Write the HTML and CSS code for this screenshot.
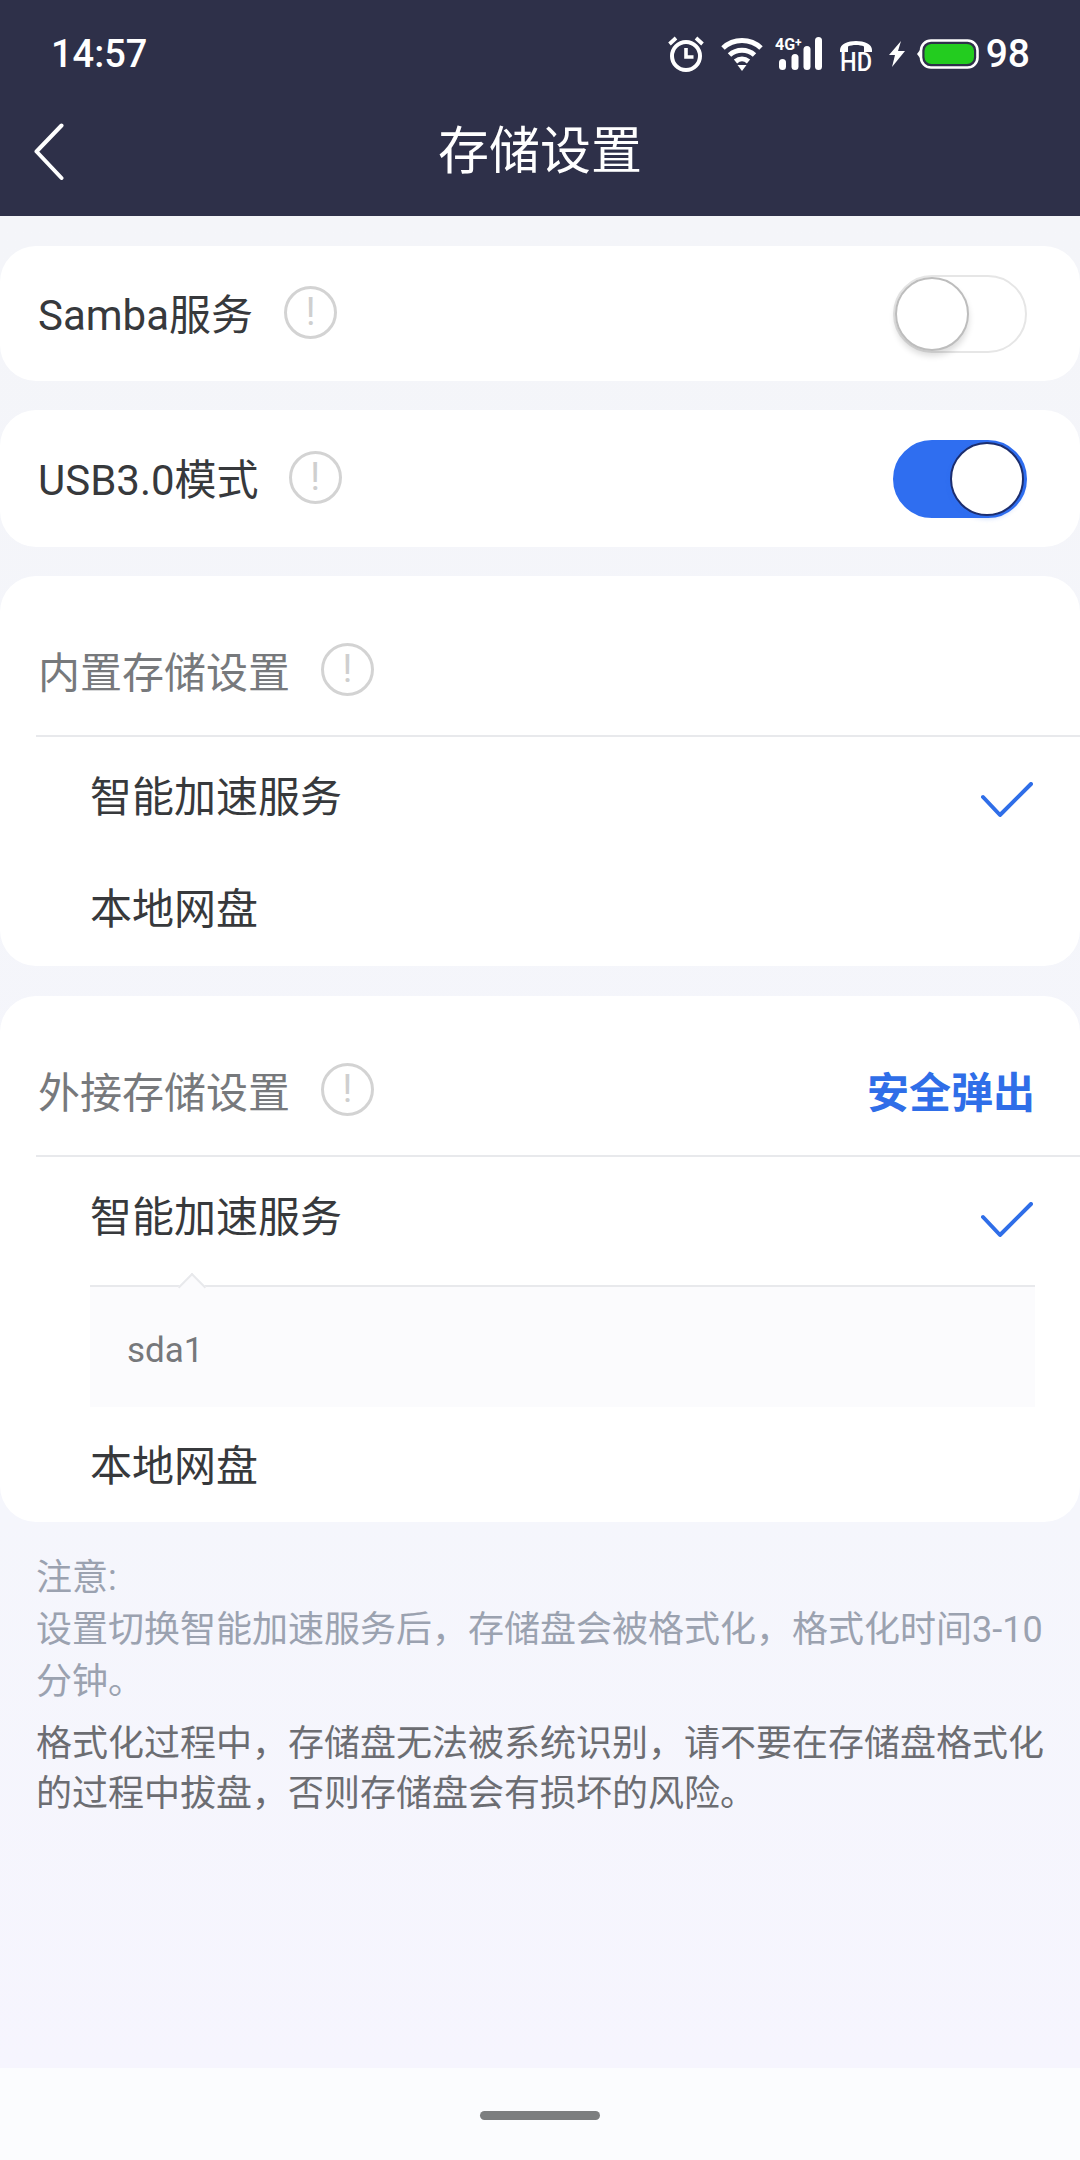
FILE: index.html
```html
<!DOCTYPE html>
<html lang="zh-CN">
<head>
    <meta charset="UTF-8">
    <meta name="viewport" content="width=device-width, initial-scale=1.0">
    <title>存储设置</title>
    <link rel="stylesheet" href="styles.css">
</head>
<body>
<div class="app">
    <header class="top">
        <div class="status">
            <span class="time">14:57</span>
            <div class="status-icons">
                <svg class="i-alarm" width="36" height="36" viewBox="0 0 36 36" fill="none" stroke="#fff" stroke-width="4">
                    <circle cx="18" cy="20" r="14"/>
                    <path d="M18 12v9h7.500" stroke-width="3.600"/>
                    <path d="M1.500 8 8 2M34.500 8 28 2" stroke-width="3.800"/>
                </svg>
                <svg class="i-wifi" width="42" height="34" viewBox="0 0 42 34" fill="none" stroke="#fff" stroke-width="5">
                    <path d="M2 11C12.500 1 29.500 1 40 11"/>
                    <path d="M8.500 18C15.500 11.500 26.500 11.500 33.500 18"/>
                    <path d="M14.500 24.500C18.500 21 23.500 21 27.500 24.500"/>
                    <path d="M16.500 28H25.500L21 34Z" fill="#fff" stroke="none"/>
                </svg>
                <svg class="i-signal" width="48" height="42" viewBox="0 -8 48 42" fill="#fff">
                    <text x="0" y="13" class="svg-small">4G<tspan class="svg-plus" dy="-3">+</tspan></text>
                    <rect x="4" y="22" width="7" height="11" rx="3.500"/>
                    <rect x="16.500" y="17" width="7" height="16" rx="3.500"/>
                    <rect x="28.500" y="9" width="7" height="24" rx="3.500"/>
                    <rect x="40" y="0" width="7" height="33" rx="3.500"/>
                </svg>
                <svg class="i-hd" width="34" height="44" viewBox="0 0 34 44" fill="#fff">
                    <path d="M1 13C1 1 33 1 33 13V15H25V9.500C21 7.500 13 7.500 9 9.500V15H1Z"/>
                    <text x="1" y="34" class="svg-hd" textLength="32" lengthAdjust="spacingAndGlyphs">HD</text>
                </svg>
                <svg class="i-bolt" width="18" height="26" viewBox="0 0 18 26" fill="#fff">
                    <path d="M13 0 1 14H7L4 26 17 10H10Z"/>
                </svg>
                <svg class="i-battery" width="62" height="30" viewBox="0 0 62 30">
                    <path d="M3 11 0 15 3 19Z" fill="#fff"/>
                    <rect x="4" y="1.500" width="56.500" height="27" rx="10" fill="none" stroke="#fff" stroke-width="2.600"/>
                    <rect x="7.500" y="5" width="49.500" height="20" rx="7" fill="#23cc1f"/>
                </svg>
                <span class="battery-num">98</span>
            </div>
        </div>
        <nav class="nav">
            <svg class="back" width="30" height="58" viewBox="0 0 30 58" fill="none" stroke="#fff" stroke-width="4" stroke-linecap="round" stroke-linejoin="round">
                <path d="M27.500 2.500 2.500 28.500 27.500 55"/>
            </svg>
            <h1 class="title">存储设置</h1>
        </nav>
    </header>

    <main class="content">
        <section class="card row-card">
            <span class="label">Samba服务</span>
            <span class="info">!</span>
            <div class="toggle"><span class="knob"></span></div>
        </section>

        <section class="card row-card usb-card">
            <span class="label">USB3.0模式</span>
            <span class="info">!</span>
            <div class="toggle on"><span class="knob"></span></div>
        </section>

        <section class="card group">
            <div class="group-head">
                <span class="group-title">内置存储设置</span>
                <span class="info">!</span>
            </div>
            <div class="option first">
                <span class="option-text">智能加速服务</span>
                <svg class="check" width="52" height="36" viewBox="0 0 52 36" fill="none" stroke="#2f6ee8" stroke-width="4" stroke-linecap="round" stroke-linejoin="round">
                    <path d="M2 15 19 33 50 2"/>
                </svg>
            </div>
            <div class="option last"><span class="option-text">本地网盘</span></div>
        </section>

        <section class="card group">
            <div class="group-head">
                <span class="group-title">外接存储设置</span>
                <span class="info">!</span>
                <span class="eject">安全弹出</span>
            </div>
            <div class="option first open">
                <span class="option-text">智能加速服务</span>
                <svg class="check" width="52" height="36" viewBox="0 0 52 36" fill="none" stroke="#2f6ee8" stroke-width="4" stroke-linecap="round" stroke-linejoin="round">
                    <path d="M2 15 19 33 50 2"/>
                </svg>
            </div>
            <div class="disk"><span class="disk-name">sda1</span></div>
            <div class="option ext-last"><span class="option-text">本地网盘</span></div>
        </section>

        <section class="notes">
            <p class="note-grey">注意:<br>设置切换智能加速服务后，存储盘会被格式化，格式化时间3-10分钟。</p>
            <p class="note-dark">格式化过程中，存储盘无法被系统识别，请不要在存储盘格式化的过程中拔盘，否则存储盘会有损坏的风险。</p>
        </section>
    </main>

    <footer class="home-bar"><span class="home-pill"></span></footer>
</div>
</body>
</html>
```

FILE: styles.css
```css
* {
    box-sizing: border-box;
}

body {
    margin: 0;
    font-family: Roboto, "Noto Sans CJK SC", sans-serif;
    color: #37393c;
    background-color: #f4f5fa;
}

.app {
    width: 1080px;
    height: 2160px;
    display: flex;
    flex-direction: column;
    overflow: hidden;
}

/* header */

.top {
    height: 216px;
    background-color: #2e3049;
    color: #fff;
    flex: none;
}

.status {
    height: 104px;
    padding: 4px 50px 0 51px;
    display: flex;
    justify-content: space-between;
    align-items: center;
}

.time {
    font-size: 38px;
    font-weight: 500;
}

.status-icons {
    display: flex;
    align-items: center;
}

.status-icons svg {
    display: block;
}

.i-alarm {
    margin-right: 17px;
}

.i-wifi {
    margin-right: 12px;
}

.i-signal {
    margin-right: 16px;
    margin-top: -8px;
}

.i-hd {
    margin-right: 15px;
    margin-bottom: -10px;
}

.i-bolt {
    margin-right: 11px;
}

.i-battery {
    margin-right: 7px;
}

.svg-small {
    font-family: Roboto, sans-serif;
    font-size: 16px;
    font-weight: 700;
}

.svg-plus {
    font-size: 12px;
}

.svg-hd {
    font-family: Roboto, sans-serif;
    font-size: 25px;
    font-weight: 500;
}

.battery-num {
    font-size: 39px;
    font-weight: 500;
    line-height: 1;
}

.nav {
    height: 112px;
    padding: 0 34px 16px;
    display: grid;
    grid-template-columns: 1fr auto 1fr;
    align-items: center;
}

.back {
    display: block;
}

.title {
    margin: 0;
    font-size: 51px;
    font-weight: 400;
    line-height: 70px;
}

/* cards */

.content {
    flex: 1;
    padding-top: 30px;
    background: linear-gradient(180deg, #f4f5f9 0%, #f5f6fc 70%, #f6f5fe 100%);
}

.card {
    background-color: #fff;
    border-radius: 36px;
    margin-bottom: 30px;
}

.row-card {
    height: 135px;
    margin-bottom: 29px;
    padding: 0 53px 0 38px;
    display: flex;
    align-items: center;
}

.usb-card {
    height: 137px;
}

.usb-card .info {
    margin-left: 30px;
}

.label {
    padding-bottom: 5px;
    font-size: 42px;
    white-space: nowrap;
}

.info {
    width: 53px;
    height: 53px;
    margin-left: 31px;
    border: 3px solid #d3d3d3;
    border-radius: 50%;
    color: #cfcfcf;
    font-size: 38px;
    line-height: 46px;
    text-align: center;
    flex: none;
}

.row-card .info {
    margin-bottom: 2px;
}

.toggle {
    width: 134px;
    height: 78px;
    margin-left: auto;
    padding: 2px 0 0 2px;
    border: 2px solid #e6e6e6;
    border-radius: 39px;
    display: flex;
    justify-content: flex-start;
}

.knob {
    width: 74px;
    height: 74px;
    margin: -2px 0 0 -2px;
    background-color: #fff;
    border: 2px solid #bdbdbd;
    border-radius: 50%;
    box-shadow: 0 5px 6px rgba(0, 0, 0, 0.14);
    flex: none;
}

.toggle.on {
    background-color: #2f6ef0;
    border-color: #2f6ef0;
    justify-content: flex-end;
    padding: 2px 2px 0 0;
}

.toggle.on .knob {
    margin: -2px -1px 0 0;
    border-color: #1d2e6e;
    box-shadow: 0 3px 4px rgba(47, 110, 240, 0.25);
}

.group {
    padding-left: 36px;
}

.group-head {
    height: 161px;
    padding: 28px 45px 0 2px;
    display: flex;
    align-items: center;
    border-bottom: 2px solid #e8e9ec;
}

.group-title {
    font-size: 42px;
    color: #77797c;
}

.eject {
    margin-left: auto;
    font-size: 42px;
    font-weight: 700;
    color: #2f6ee8;
}

.option {
    padding: 0 47px 0 54px;
    display: flex;
    justify-content: space-between;
    align-items: center;
    font-size: 42px;
}

.option-text {
    padding-bottom: 5px;
}

.check {
    margin-top: 9px;
}

.option.first {
    height: 117px;
}

.option.open {
    height: 128px;
    padding-bottom: 11px;
}

.option.last {
    height: 112px;
}

.option.last .option-text {
    padding-bottom: 10px;
}

.option.ext-last {
    height: 115px;
}

.disk {
    position: relative;
    width: 945px;
    height: 122px;
    margin-left: 54px;
    padding: 6px 0 0 37px;
    background-color: #fbfbfd;
    border-top: 2px solid #e8e9ec;
    display: flex;
    align-items: center;
}

/* little arrow sitting on the divider */
.disk::before {
    content: "";
    position: absolute;
    left: 92px;
    top: -10px;
    width: 18px;
    height: 18px;
    background-color: #fbfbfd;
    border-top: 2px solid #e8e9ec;
    border-left: 2px solid #e8e9ec;
    transform: rotate(45deg);
}

.disk-name {
    font-size: 35px;
    color: #76787b;
}

/* notes */

.notes {
    padding: 0 36px;
    margin-top: 2px;
    font-size: 36px;
}

.notes p {
    margin: 0;
    width: 1010px;
}

.note-grey {
    color: #9ba2b0;
    line-height: 52px;
}

.notes .note-dark {
    margin-top: 11px;
    color: #6c6d72;
    line-height: 50px;
}

/* bottom bar */

.home-bar {
    height: 92px;
    background-color: #fbfcfe;
    display: flex;
    justify-content: center;
    padding-top: 43px;
    flex: none;
}

.home-pill {
    width: 120px;
    height: 9px;
    background-color: #7c7e7f;
    border-radius: 5px;
}
```
